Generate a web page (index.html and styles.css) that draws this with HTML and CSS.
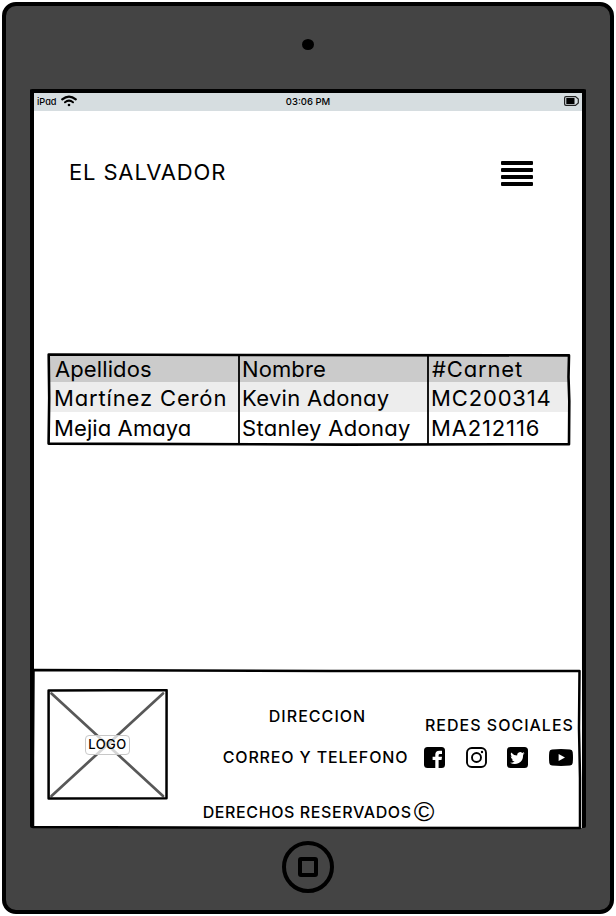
FILE: index.html
```
<!DOCTYPE html>
<html lang="es">
<head>
<meta charset="utf-8">
<title>El Salvador</title>
<link rel="stylesheet" href="styles.css">
</head>
<body>
<div class="tablet">
  <div class="camera"></div>
  <div class="screen">
    <div class="status">
      <div class="status-left"><span class="device">iPad</span>
        <svg class="wifi" viewBox="0 0 16 12" fill="none" stroke="#000" stroke-linecap="round"><path d="M1.2 4.4Q8-1.3 14.8 4.4" stroke-width="2.2"/><path d="M4 7.3Q8 4 12 7.3" stroke-width="2"/><circle cx="8" cy="10" r="1.3" fill="#000" stroke="none"/></svg>
      </div>
      <span class="clock">03:06 PM</span>
      <svg class="battery" viewBox="0 0 15 10"><path d="M2 .6H11.5L14.3 3V7L11.5 9.4H2Q.6 9.4.6 8V2Q.6.6 2 .6Z" fill="none" stroke="#222" stroke-width="1.2"/><rect x="2.3" y="2" width="8.2" height="6"/></svg>
    </div>
    <header class="header">
      <h1 class="title">EL SALVADOR</h1>
      <div class="menu"><i></i><i></i><i></i><i></i></div>
    </header>
    <main class="main">
      <div class="table">
        <div class="row head"><span class="ls-s indent">Apellidos</span><span class="ls-s">Nombre</span><span class="ls-l indent-s">#Carnet</span></div>
        <div class="row alt"><span class="ls-l">Martínez Cerón</span><span class="ls-m">Kevin Adonay</span><span class="ls-l">MC200314</span></div>
        <div class="row"><span class="ls-s">Mejia Amaya</span><span class="ls-m">Stanley Adonay</span><span class="ls-l">MA212116</span></div>
        <svg class="frame" viewBox="0 0 524 94" fill="none" stroke="#000"><path d="M1.7 1.5L200 2L522 2.4L521.5 24L522.3 48L522 91.2L300 91.6L1.6 90.6L2.2 45Z" stroke-width="2.6" stroke-linejoin="round"/><path d="M192 2V90M381 2V91" stroke-width="1.8"/></svg>
      </div>
    </main>
    <footer class="footer">
      <div class="logo">
        <svg viewBox="0 0 121 111" fill="none"><path d="M4.5 4.5L116 107M116 4.5L4.5 107" stroke="#585858" stroke-width="2.7" stroke-linecap="round"/><path d="M1.6 1.5L119.6 1.1L119.5 109.3L1.6 109.5Z" stroke="#000" stroke-width="2.5" stroke-linejoin="round"/></svg>
        <span class="logo-label">LOGO</span>
      </div>
      <div class="contact"><span class="address">DIRECCION</span><span class="mail">CORREO Y TELEFONO</span></div>
      <div class="social">
        <span class="social-title">REDES SOCIALES</span>
        <div class="icons">
          <svg width="21" height="21" viewBox="0 0 21 21"><rect width="21" height="21" rx="3.5"/><path d="M11.3 21V13H8.6V9.8H11.3V7.6Q11.3 3.7 15.2 3.7H18V6.9H16Q14.6 6.9 14.6 8.3V9.8H18L17.5 13H14.6V21Z" fill="#fff"/></svg>
          <svg width="21" height="21" viewBox="0 0 21 21" fill="none" stroke="#000" stroke-width="1.9"><rect x="1" y="1" width="19" height="19" rx="4.8"/><circle cx="10.5" cy="10.5" r="4.5"/><circle cx="16" cy="5" r="1.2" fill="#000" stroke="none"/></svg>
          <svg width="21" height="21" viewBox="0 0 21 21"><rect width="21" height="21" rx="3.5"/><path d="M17.6 6.2Q16.8 6.6 16 6.7Q16.8 6.1 17.2 5.1Q16.3 5.7 15.2 5.9A3 3 0 0 0 10.2 8.6Q6.4 8.4 4.2 5.5Q3 8 5.1 9.7Q4.3 9.6 3.7 9.3Q3.8 11.6 6.1 12.4Q5.5 12.5 4.8 12.4Q5.5 14.2 7.6 14.5Q5.6 16 3 15.8Q7.5 18.2 11.8 16.1Q16.3 13.8 16.1 7.7Q17 7.1 17.6 6.2Z" fill="#fff"/></svg>
          <svg width="24" height="17" viewBox="0 0 24 17"><path d="M3 .5Q12-.4 21 .5Q23.5.8 23.7 3Q24.3 8.5 23.7 14Q23.5 16.2 21 16.5Q12 17.4 3 16.5Q.5 16.2.3 14Q-.3 8.5.3 3Q.5.8 3 .5Z"/><path d="M9.6 5V12L16 8.5Z" fill="#fff"/></svg>
        </div>
      </div>
      <div class="rights"><span class="rights-text">DERECHOS RESERVADOS</span><span class="copy">©</span></div>
      <svg class="footer-frame" viewBox="0 0 552 162" fill="none" stroke="#000"><path d="M2.5 2L300 3L548.5 3L548 60L549 110L549 160L250 159.8L2 159L2 90Z" stroke-width="2.5" stroke-linejoin="round"/></svg>
    </footer>
  </div>
  <div class="home"><i></i></div>
</div>
</body>
</html>
```
FILE: styles.css
```
* { box-sizing: border-box; }
body { margin: 0; background: #fff; color: #000; font-family: Inter, "Liberation Sans", sans-serif; font-feature-settings: "cv11"; white-space: nowrap; }
svg { display: block; }
.tablet { width: 612px; height: 912px; margin: 2px; border: 4px solid #000; border-radius: 14px; background: #444; padding: 0 24px; display: flex; flex-direction: column; align-items: center; }
.camera { width: 12px; height: 11px; border-radius: 50%; background: #000; margin: 33px 0 39px; flex: none; }
.screen { width: 556px; height: 739px; flex: none; border: 4px solid #000; border-bottom: 0; border-radius: 2px; background: #fff; display: flex; flex-direction: column; }
.status { height: 18px; background: #d6dde0; display: grid; grid-template-columns: 1fr auto 1fr; align-items: center; padding: 0 3px 2px 3px; font-size: 9.5px; font-weight: 500; }
.status-left { display: flex; align-items: center; gap: 4px; }
.device { width: 20px; font-size: 9.2px; font-weight: 450; }
.wifi { width: 16px; height: 12px; }
.battery { width: 15px; height: 10px; justify-self: end; }
.header { height: 124px; display: flex; justify-content: space-between; align-items: center; padding: 0 49px 0 35px; }
.title { margin: 0 0 2px; font-size: 22px; font-weight: 400; line-height: 26px; letter-spacing: .85px; }
.menu { width: 32px; display: grid; gap: 3px; }
.menu i { height: 4px; border-radius: 1px; background: #000; }
.main { flex: 1; padding: 118px 11px 0 13px; }
.table { position: relative; width: 524px; height: 94px; padding: 2px 2px 3px; font-size: 22px; }
.row { display: grid; grid-template-columns: 190px 189px 1fr; height: 30px; line-height: 32px; }
.row span { padding-left: 5px; }
.row span + span { padding-left: 3px; }
.row span.indent { padding-left: 6px; }
.row span.indent-s { padding-left: 4px; }
.ls-s { letter-spacing: .1px; }
.ls-m { letter-spacing: .3px; }
.ls-l { letter-spacing: .85px; }
.head { height: 27px; line-height: 29px; background: #cbcbcb; }
.alt { background: #ededed; }
.frame { position: absolute; left: 0; top: 0; width: 524px; height: 94px; }
.footer { position: relative; height: 159px; flex: none; padding: 20px 7px 0 13px; display: grid; grid-template-columns: 121px 1fr 150px; grid-template-rows: 111px 24px; font-size: 16px; font-weight: 450; line-height: 20px; }
.footer-frame { position: absolute; left: -3px; top: -1px; width: 552px; height: 162px; }
.logo { position: relative; width: 121px; height: 111px; }
.logo-label { position: absolute; left: 38px; top: 46px; width: 45px; height: 20px; border: 1px solid #c8c8c8; border-radius: 4px; background: rgba(255,255,255,.75); font-size: 13px; line-height: 16px; letter-spacing: .5px; text-align: center; }
.contact { display: flex; flex-direction: column; align-items: center; gap: 21px; padding: 17px 0 0 38px; }
.address { letter-spacing: 1.05px; padding-left: 4px; }
.mail { letter-spacing: .85px; }
.social { padding-top: 26px; }
.social-title { letter-spacing: 1px; }
.icons { display: flex; justify-content: space-between; align-items: center; margin: 12px 0 0 -1px; width: 149px; }
.rights { grid-column: 1 / -1; display: flex; justify-content: center; align-items: center; padding-left: 15px; }
.rights-text { letter-spacing: .6px; }
.copy { font-family: "Liberation Sans", sans-serif; font-size: 28px; font-weight: 400; margin-left: 2px; }
.home { width: 52px; height: 52px; border: 4px solid #000; border-radius: 50%; margin-top: 13px; display: grid; place-items: center; flex: none; }
.home i { width: 20px; height: 20px; border: 4px solid #000; border-radius: 3px; }
```
